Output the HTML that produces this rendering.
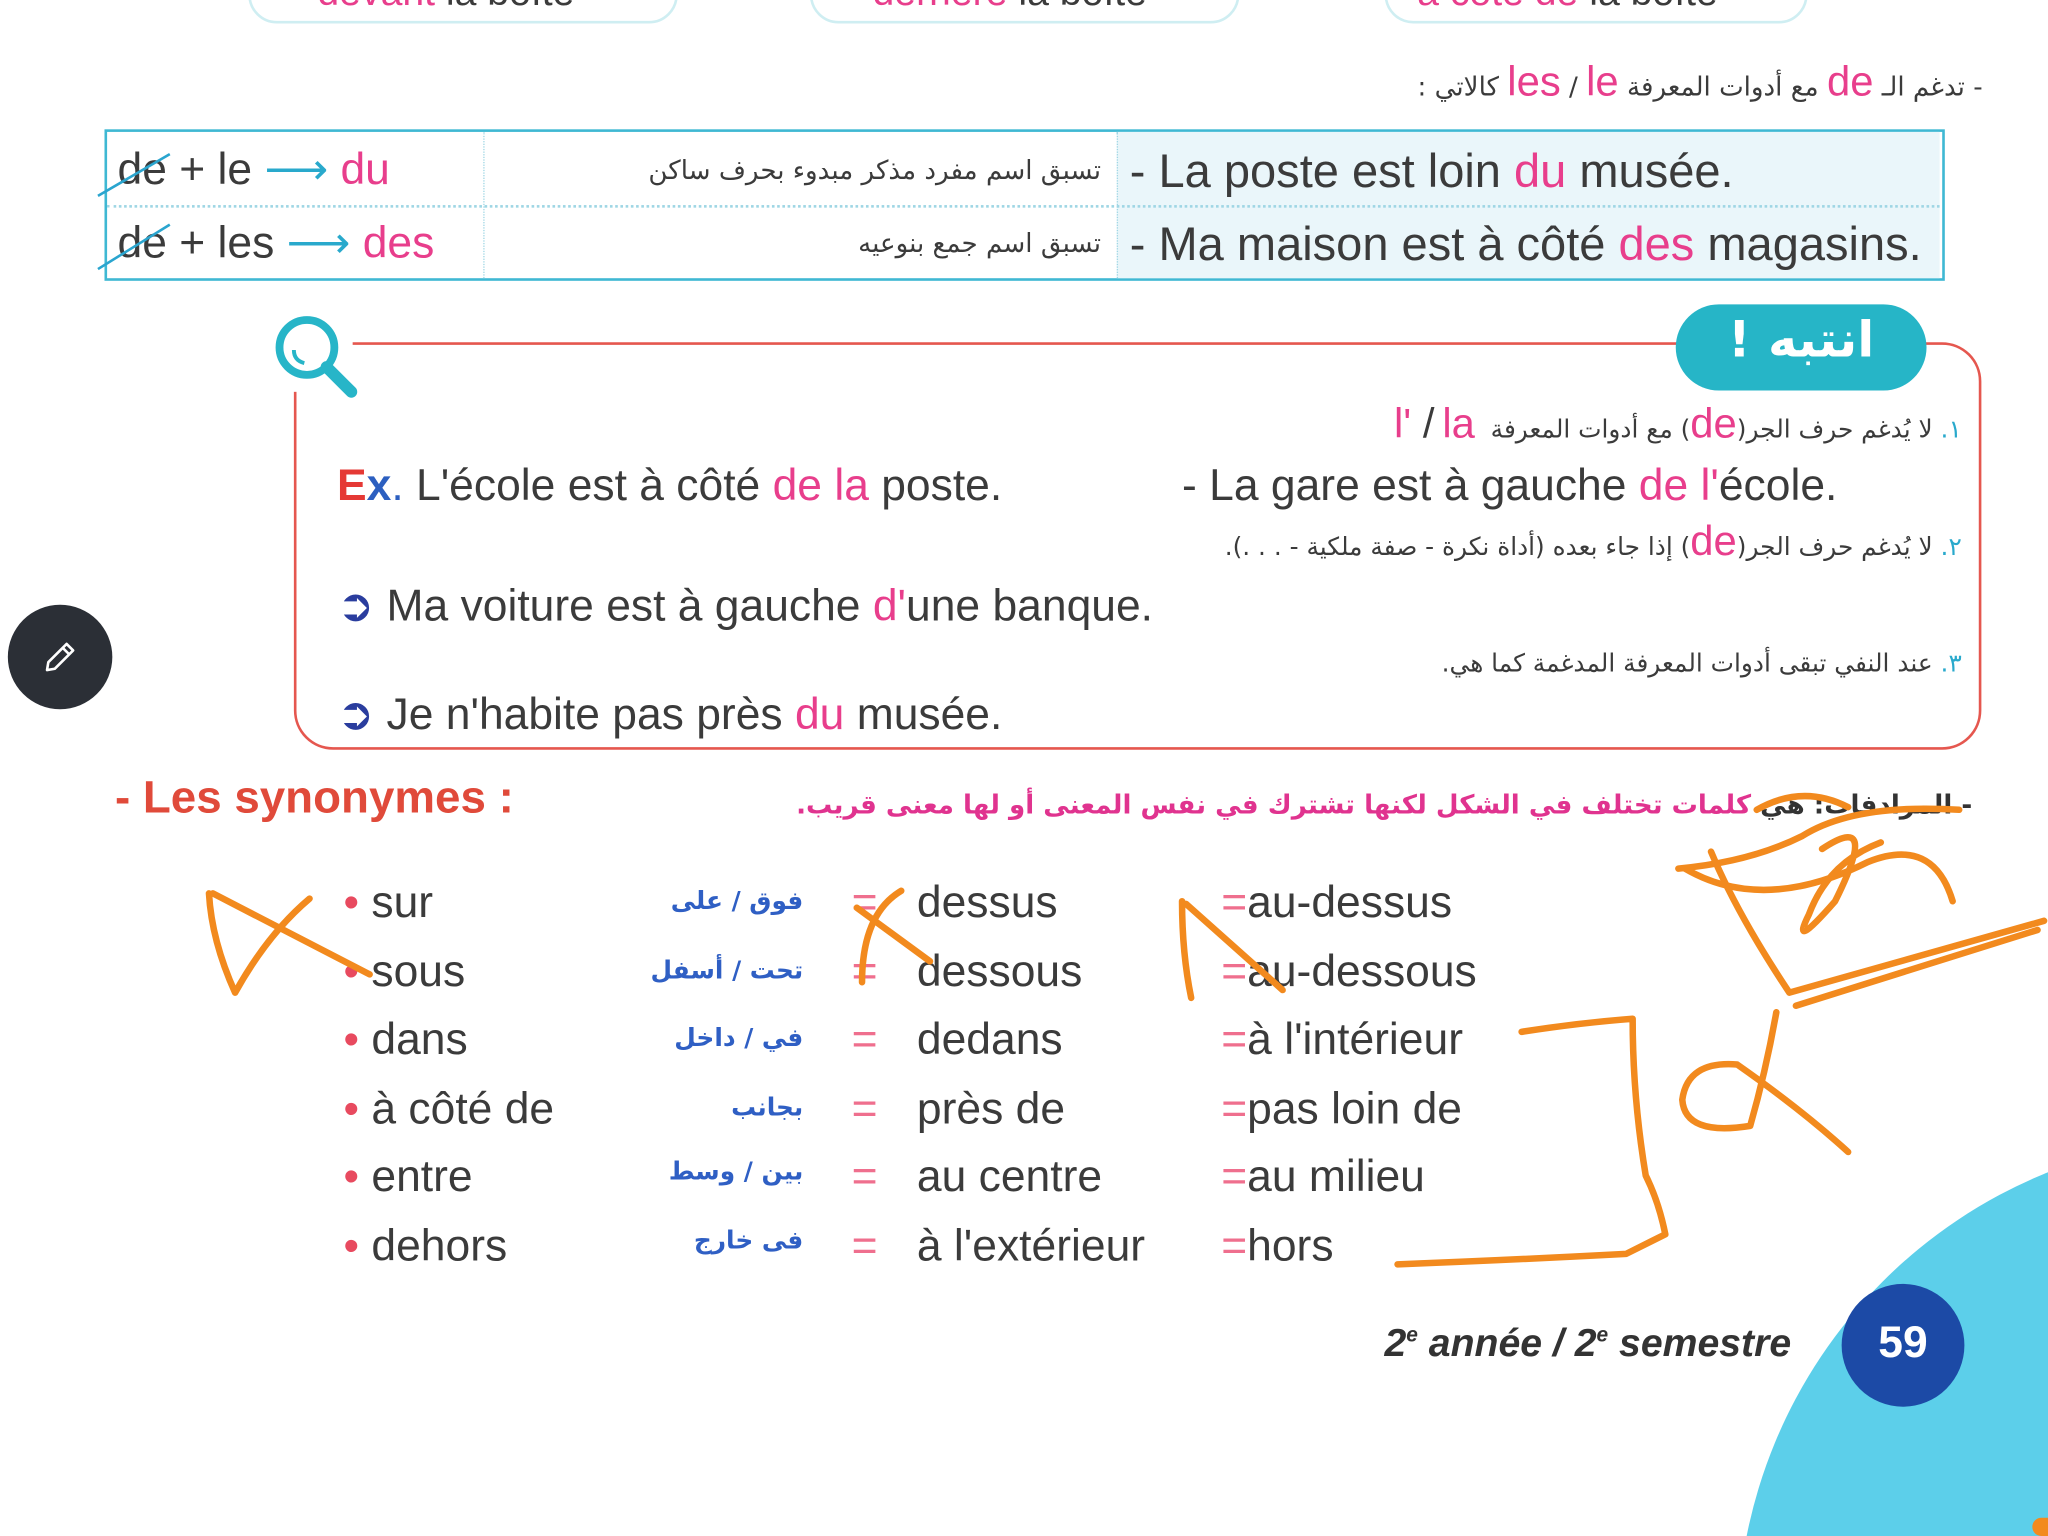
<!DOCTYPE html>
<html><head><meta charset="utf-8"><style>
html,body{margin:0;padding:0;background:#fff;width:2048px;height:1536px;overflow:hidden;}
body{position:relative;}
#clip{position:absolute;left:0;top:0;width:2048px;height:1536px;overflow:hidden;}
#w{position:absolute;left:0;top:0;width:1568px;height:1176px;overflow:hidden;transform:scale(1.306122);transform-origin:0 0;font-family:"Liberation Sans","Noto Sans CJK SC",sans-serif;color:#3b3b3b;}
.a{position:absolute;white-space:nowrap;}
.p{color:#e83e8c;}
.ar{font-family:"DejaVu Sans","Noto Sans CJK SC",sans-serif;direction:rtl;}
.t{font-size:34px;}
</style></head><body><div id="clip"><div id="w">
<!-- top pills -->
<div class="a" style="left:190px;top:-30px;width:325px;height:44px;border:2px solid #cfeef2;border-radius:22px;"></div>
<div class="a" style="left:620px;top:-30px;width:325px;height:44px;border:2px solid #cfeef2;border-radius:22px;"></div>
<div class="a" style="left:1060px;top:-30px;width:320px;height:44px;border:2px solid #cfeef2;border-radius:22px;"></div>
<div class="a" style="left:243px;top:-22px;font-size:30px;"><span class="p">devant</span> la boîte</div>
<div class="a" style="left:668px;top:-22px;font-size:30px;"><span class="p">derrière</span> la boîte</div>
<div class="a" style="left:1085px;top:-22px;font-size:30px;"><span class="p">à côté de</span> la boîte</div>

<div class="a ar" style="right:50px;top:44px;font-size:20px;">- تدغم الـ <span class="p" style="font-family:Liberation Sans;font-size:32px">de</span> مع أدوات المعرفة <span class="p" style="font-family:Liberation Sans;font-size:32px">les</span> / <span class="p" style="font-family:Liberation Sans;font-size:32px">le</span> كالاتي :</div>

<!-- table -->
<div class="a" style="left:80px;top:99px;width:1405px;height:112px;border:2px solid #3fb8d3;"></div>
<div class="a" style="left:855px;top:101px;width:630px;height:112px;background:#eaf6fa;"></div>
<div class="a" style="left:82px;top:157px;width:1403px;border-top:2px dotted #9fd6e4;"></div>
<div class="a" style="left:370px;top:101px;height:112px;border-left:1px dotted #9fd6e4;"></div>
<div class="a" style="left:855px;top:101px;height:112px;border-left:1px dotted #9fd6e4;"></div>
<div class="a t" style="left:90px;top:110px;">de + le <span style="color:#29a9cc">⟶</span> <span class="p">du</span></div>
<div class="a t" style="left:90px;top:166px;">de + les <span style="color:#29a9cc">⟶</span> <span class="p">des</span></div>
<svg class="a" style="left:70px;top:110px" width="120" height="100"><path d="M5 40 L60 8 M5 96 L60 62" stroke="#2aa5cf" stroke-width="2" fill="none"/></svg>
<div class="a ar" style="right:725px;top:118px;font-size:20px;">تسبق اسم مفرد مذكر مبدوء بحرف ساكن</div>
<div class="a ar" style="right:725px;top:174px;font-size:20px;">تسبق اسم جمع بنوعيه</div>
<div class="a t" style="left:865px;top:110px;font-size:36px;">- La poste est loin <span class="p">du</span> musée.</div>
<div class="a t" style="left:865px;top:166px;font-size:36px;">- Ma maison est à côté <span class="p">des</span> magasins.</div>

<!-- note box -->
<div class="a" style="left:225px;top:262px;width:1288px;height:308px;border:2.5px solid #e5574f;border-radius:30px;"></div>
<div class="a" style="left:200px;top:240px;width:70px;height:60px;background:#fff;"></div>
<svg class="a" style="left:203px;top:238px" width="80" height="70"><circle cx="32" cy="28" r="21" stroke="#27b5c8" stroke-width="6" fill="#fff"/><path d="M47 43 L66 62" stroke="#27b5c8" stroke-width="9" stroke-linecap="round"/><path d="M22 30 Q22 38 30 40" stroke="#27b5c8" stroke-width="3" fill="none"/></svg>
<div class="a" style="left:1283px;top:233px;width:192px;height:66px;background:#26b5c7;border-radius:33px;"></div>
<div class="a ar" style="left:1283px;width:192px;top:238px;text-align:center;font-size:38px;font-weight:bold;color:#fff;">انتبه !</div>
<div class="a ar" style="right:66px;top:306px;font-size:19px;"><span style="color:#29a9cc">١.</span> لا يُدغم حرف الجر(<span class="p" style="font-family:Liberation Sans;font-size:32px">de</span>) مع أدوات المعرفة &nbsp;<span class="p" style="font-family:Liberation Sans;font-size:32px">l' </span><span style="font-family:Liberation Sans;font-size:32px">/</span> <span class="p" style="font-family:Liberation Sans;font-size:32px">la</span></div>
<div class="a t" style="left:258px;top:353px;"><b style="color:#e53935">E</b><b style="color:#2c5fc0">x</b><span style="color:#2c5fc0">.</span> L'école est à côté <span class="p">de la</span> poste.</div>
<div class="a t" style="left:905px;top:353px;">- La gare est à gauche <span class="p">de l'</span>école.</div>
<div class="a ar" style="right:66px;top:396px;font-size:19px;"><span style="color:#29a9cc">٢.</span> لا يُدغم حرف الجر(<span class="p" style="font-family:Liberation Sans;font-size:32px">de</span>) إذا جاء بعده (أداة نكرة - صفة ملكية - . . .).</div>
<div class="a t" style="left:258px;top:444px;"><span style="color:#2a3d9e">➲</span> Ma voiture est à gauche <span class="p">d'</span>une banque.</div>
<div class="a ar" style="right:66px;top:497px;font-size:19px;"><span style="color:#29a9cc">٣.</span> عند النفي تبقى أدوات المعرفة المدغمة كما هي.</div>
<div class="a t" style="left:258px;top:527px;"><span style="color:#2a3d9e">➲</span> Je n'habite pas près <span class="p">du</span> musée.</div>

<!-- pencil -->
<div class="a" style="left:6px;top:463px;width:80px;height:80px;border-radius:40px;background:#2b2f36;"></div>
<svg class="a" style="left:30px;top:487px" width="32" height="32"><path d="M6 26 L7 20 L21 6 L26 11 L12 25 Z M18 9 L23 14" stroke="#fff" stroke-width="2" fill="none" stroke-linejoin="round"/></svg>

<!-- synonyms -->
<div class="a" style="left:88px;top:591px;font-size:35px;font-weight:bold;color:#e04a3a;">- Les synonymes :</div>
<div class="a ar" style="right:58px;top:604px;font-size:20px;font-weight:bold;color:#e0338f;"><span style="color:#333">- المرادفات: هي</span> كلمات تختلف في الشكل لكنها تشترك في نفس المعنى أو لها معنى قريب.</div>

<div class="a t" style="left:263px;top:665px;line-height:52.5px;"><span style="color:#e84a5f">•</span> sur<br><span style="color:#e84a5f">•</span> sous<br><span style="color:#e84a5f">•</span> dans<br><span style="color:#e84a5f">•</span> à côté de<br><span style="color:#e84a5f">•</span> entre<br><span style="color:#e84a5f">•</span> dehors</div>
<div class="a ar" style="right:953px;top:679px;font-size:19px;font-weight:bold;color:#2f5fc4;">فوق / على</div>
<div class="a ar" style="right:953px;top:732px;font-size:19px;font-weight:bold;color:#2f5fc4;">تحت / أسفل</div>
<div class="a ar" style="right:953px;top:784px;font-size:19px;font-weight:bold;color:#2f5fc4;">في / داخل</div>
<div class="a ar" style="right:953px;top:837px;font-size:19px;font-weight:bold;color:#2f5fc4;">بجانب</div>
<div class="a ar" style="right:953px;top:886px;font-size:19px;font-weight:bold;color:#2f5fc4;">بين / وسط</div>
<div class="a ar" style="right:953px;top:939px;font-size:19px;font-weight:bold;color:#2f5fc4;">فى خارج</div>
<div class="a t" style="left:652px;top:665px;color:#ef6f8e;line-height:52.5px;">=<br>=<br>=<br>=<br>=<br>=</div>
<div class="a t" style="left:702px;top:665px;line-height:52.5px;">dessus<br>dessous<br>dedans<br>près de<br>au centre<br>à l'extérieur</div>
<div class="a t" style="left:935px;top:665px;line-height:52.5px;"><span style="color:#ef6f8e">=</span>au-dessus<br><span style="color:#ef6f8e">=</span>au-dessous<br><span style="color:#ef6f8e">=</span>à l'intérieur<br><span style="color:#ef6f8e">=</span>pas loin de<br><span style="color:#ef6f8e">=</span>au milieu<br><span style="color:#ef6f8e">=</span>hors</div>

<!-- footer -->
<svg class="a" style="left:1320px;top:860px" width="248" height="316"><circle cx="390" cy="390" r="380" fill="#5ccfea"/></svg>
<div class="a" style="left:1060px;top:1012px;font-size:30px;font-weight:bold;font-style:italic;color:#333;">2<sup style="font-size:16px">e</sup> année / 2<sup style="font-size:16px">e</sup> semestre</div>
<div class="a" style="left:1410px;top:983px;width:94px;height:94px;border-radius:47px;background:#1c4aa6;color:#fff;font-size:34px;font-weight:bold;text-align:center;line-height:90px;">59</div>
<div class="a" style="left:1556px;top:1162px;width:12px;height:14px;border-radius:7px 0 0 7px;background:#f28a1e;"></div>

<!-- orange annotations -->
<svg class="a" style="left:0;top:0" width="1568" height="1176"><g stroke="#f28a1e" stroke-width="5" fill="none" stroke-linecap="round" stroke-linejoin="round">
<path d="M160 684 Q162 720 180 760 Q205 715 237 688"/>
<path d="M163 684 L283 746"/>
<path d="M690 682 Q660 700 660 752"/>
<path d="M656 695 L712 736"/>
<path d="M905 690 Q905 730 912 764"/>
<path d="M908 692 L982 758"/>
<path d="M1285 665 Q1340 660 1380 640 Q1420 615 1500 620"/>
<path d="M1310 652 Q1330 700 1370 760 L1565 705 M1375 770 L1560 712"/>
<path d="M1395 650 Q1440 620 1405 690 Q1370 730 1385 700 Q1400 660 1440 645"/>
<path d="M1290 665 Q1350 700 1430 660 Q1480 640 1495 690"/>
<path d="M1345 620 Q1380 600 1415 618"/>
<path d="M1165 790 Q1210 783 1250 780 Q1250 840 1260 900 Q1270 920 1275 945 L1245 960 Q1150 965 1070 968"/>
<path d="M1360 775 Q1352 820 1340 862 Q1290 870 1288 842 Q1292 812 1330 815 Q1380 850 1415 882"/>
</g></svg>
</div></div></body></html>
